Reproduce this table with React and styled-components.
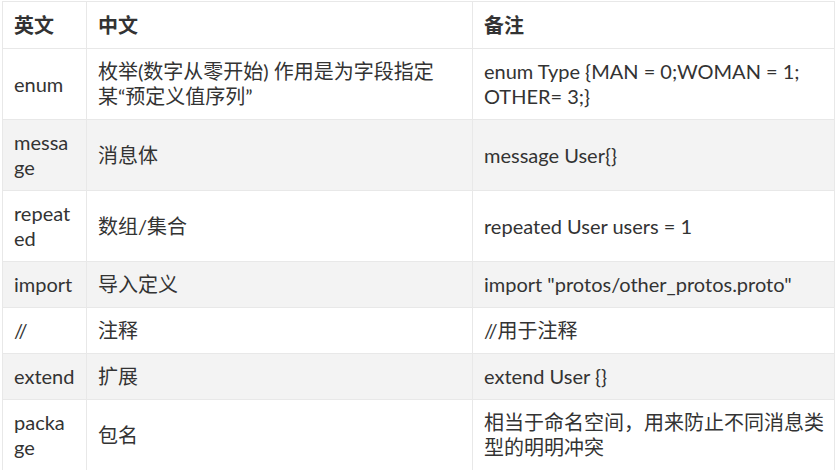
import React from 'react';
import styled, { createGlobalStyle } from 'styled-components';

const GlobalStyle = createGlobalStyle`
  body {
    margin: 0;
    background: #fff;
    font-family: "Lato", "Noto Sans CJK SC", sans-serif;
    color: #333;
  }
`;

const Wrapper = styled.div`
  padding: 1px 0 0 2px;
`;

const Table = styled.table`
  width: 832px;
  border-collapse: collapse;
  table-layout: fixed;
  font-size: 20px;
  line-height: 25px;
`;

const Row = styled.tr`
  background: ${props => (props.$shaded ? '#f3f3f3' : '#fff')};
`;

const HeadCell = styled.th`
  border: 1px solid #e8e8e8;
  padding: 11px 11px 10px;
  text-align: left;
  font-weight: 700;
  color: #333;
`;

const Cell = styled.td`
  border: 1px solid #e8e8e8;
  padding: 10px ${props => (props.$note ? '6px' : '11px')} 10px 11px;
  vertical-align: middle;
  word-break: ${props => (props.$breakAll ? 'break-all' : 'normal')};
`;

const rows = [
  { en: 'enum', zh: '枚举(数字从零开始) 作用是为字段指定某“预定义值序列”', note: 'enum Type {MAN = 0;WOMAN = 1; OTHER= 3;}' },
  { en: 'message', zh: '消息体', note: 'message User{}' },
  { en: 'repeated', zh: '数组/集合', note: 'repeated User users = 1' },
  { en: 'import', zh: '导入定义', note: 'import "protos/other_protos.proto"' },
  { en: '//', zh: '注释', note: '//用于注释' },
  { en: 'extend', zh: '扩展', note: 'extend User {}' },
  { en: 'package', zh: '包名', note: '相当于命名空间，用来防止不同消息类型的明明冲突' },
];

function App() {
  return (
    <Wrapper>
      <GlobalStyle />
      <Table>
        <colgroup>
          <col style={{ width: 84 }} />
          <col style={{ width: 386 }} />
          <col style={{ width: 362 }} />
        </colgroup>
        <thead>
          <Row>
            <HeadCell>英文</HeadCell>
            <HeadCell>中文</HeadCell>
            <HeadCell>备注</HeadCell>
          </Row>
        </thead>
        <tbody>
          {rows.map((r, i) => (
            <Row key={r.en} $shaded={i % 2 === 1}>
              <Cell $breakAll>{r.en}</Cell>
              <Cell>{r.zh}</Cell>
              <Cell $note>{r.note}</Cell>
            </Row>
          ))}
        </tbody>
      </Table>
    </Wrapper>
  );
}

export default App;
